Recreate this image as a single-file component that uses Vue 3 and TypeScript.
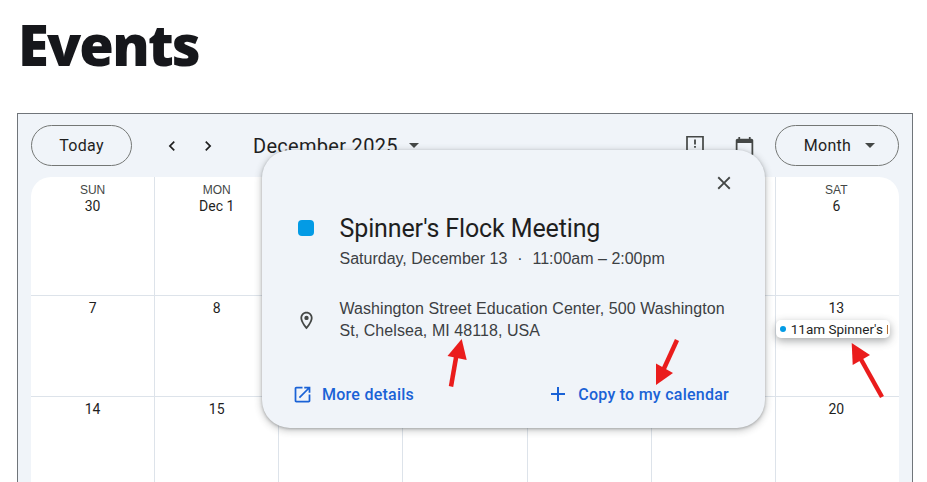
<template>
  <div class="page">
    <h1 class="page-title">Events</h1>

    <div class="calendar-frame">
      <div class="toolbar">
        <button class="pill today-button">Today</button>
        <div class="nav-arrows">
          <svg viewBox="0 0 24 24" class="chevron"><path d="M15.41 7.41 14 6l-6 6 6 6 1.41-1.41L10.83 12z" /></svg>
          <svg viewBox="0 0 24 24" class="chevron"><path d="M8.59 16.59 10 18l6-6-6-6-1.41 1.41L13.17 12z" /></svg>
        </div>
        <div class="month-title">December 2025</div>
        <span class="caret month-caret"></span>
        <div class="toolbar-spacer"></div>
        <svg viewBox="0 0 18 18" class="tool-icon feedback-icon">
          <path d="M1 1.75h16v15.5H1z" fill="none" stroke="#444746" stroke-width="1.7" />
          <path d="M8.1 4.5h1.8v5H8.1zM8.1 11h1.8v1.8H8.1z" fill="#444746" />
        </svg>
        <svg viewBox="0 0 24 24" class="tool-icon calendar-icon">
          <path d="M20 3h-1V1h-2v2H7V1H5v2H4c-1.1 0-2 .9-2 2v16c0 1.1.9 2 2 2h16c1.1 0 2-.9 2-2V5c0-1.1-.9-2-2-2zm0 18H4V8h16v13z" />
        </svg>
        <button class="pill month-button">
          <span>Month</span>
          <span class="caret"></span>
        </button>
      </div>

      <div class="month-grid">
        <div v-for="(cell, i) in cells" :key="i" class="day-cell" :class="{ 'first-row': i < 7 }">
          <div v-if="cell.weekday" class="weekday">{{ cell.weekday }}</div>
          <div class="day-number">{{ cell.label }}</div>
          <div v-if="cell.hasEvent" class="event-chip">
            <span class="event-dot"></span>
            <span class="event-text">11am Spinner's Flock Meeting</span>
          </div>
        </div>
      </div>
    </div>

    <div class="event-popup">
      <div class="popup-close">
        <svg viewBox="0 0 24 24"><path d="M19 6.41 17.59 5 12 10.59 6.41 5 5 6.41 10.59 12 5 17.59 6.41 19 12 13.41 17.59 19 19 17.59 13.41 12z" /></svg>
      </div>
      <div class="popup-row title-row">
        <div class="popup-gutter"><span class="color-square"></span></div>
        <div class="popup-title">Spinner's Flock Meeting</div>
      </div>
      <div class="popup-row">
        <div class="popup-gutter"></div>
        <div class="popup-when">Saturday, December 13 <span class="when-dot">·</span> 11:00am – 2:00pm</div>
      </div>
      <div class="popup-row location-row">
        <div class="popup-gutter">
          <svg viewBox="0 0 24 24" class="pin-icon">
            <path d="M12 2C8.13 2 5 5.13 5 9c0 5.25 7 13 7 13s7-7.75 7-13c0-3.87-3.13-7-7-7zM7 9c0-2.76 2.24-5 5-5s5 2.24 5 5c0 2.88-2.88 7.19-5 9.88C9.92 16.21 7 11.85 7 9z" />
            <circle cx="12" cy="9" r="2.5" />
          </svg>
        </div>
        <div class="popup-address">Washington Street Education Center, 500 Washington St, Chelsea, MI 48118, USA</div>
      </div>
      <div class="popup-actions">
        <a class="popup-link details-link">
          <svg viewBox="0 0 24 24"><path d="M19 19H5V5h7V3H5c-1.11 0-2 .9-2 2v14c0 1.1.89 2 2 2h14c1.1 0 2-.9 2-2v-7h-2v7zM14 3v2h3.59l-9.83 9.83 1.41 1.41L19 6.41V10h2V3h-7z" /></svg>
          More details
        </a>
        <a class="popup-link copy-link">
          <svg viewBox="0 0 24 24"><path d="M19 13h-6v6h-2v-6H5v-2h6V5h2v6h6v2z" /></svg>
          Copy to my calendar
        </a>
      </div>
    </div>

    <svg class="annotations" viewBox="0 0 927 482">
      <g v-for="arrow in arrows" :key="arrow.head">
        <path :d="arrow.shaft" class="arrow-shaft" />
        <polygon :points="arrow.head" class="arrow-head" />
      </g>
    </svg>
  </div>
</template>

<script setup lang="ts">
interface DayCell {
  label: string;
  weekday?: string;
  hasEvent?: boolean;
}

// the days behind the popup stay blank, only the visible ones get a label
const cells: DayCell[] = [
  { label: '30', weekday: 'SUN' },
  { label: 'Dec 1', weekday: 'MON' },
  { label: '' },
  { label: '' },
  { label: '' },
  { label: '' },
  { label: '6', weekday: 'SAT' },
  { label: '7' },
  { label: '8' },
  { label: '' },
  { label: '' },
  { label: '' },
  { label: '' },
  { label: '13', hasEvent: true },
  { label: '14' },
  { label: '15' },
  { label: '' },
  { label: '' },
  { label: '' },
  { label: '' },
  { label: '20' },
];

const arrows = [
  { shaft: 'M451 386.5L457 352', head: '461.7,339 447.5,356 466.7,360' },
  { shaft: 'M677 340L661 375', head: '656,385 656,363.5 673,373' },
  { shaft: 'M882 397L858 354', head: '851.7,343 852.7,365 870,355' },
];
</script>

<style>
html,
body {
  margin: 0;
  height: 482px;
  overflow: hidden;
  background: #fff;
}
</style>

<style scoped>
.page {
  position: relative;
  height: 482px;
  overflow: hidden;
  padding: 0 14px 0 17px;
  font-family: "Liberation Sans", Arial, sans-serif;
  color: #1f1f1f;
}

.page-title {
  margin: 0;
  height: 113px;
  padding-left: 1px;
  font-family: "Noto Sans", sans-serif;
  font-size: 56px;
  font-weight: 900;
  line-height: 88px;
  letter-spacing: -1.8px;
  color: #16171b;
}

.calendar-frame {
  box-sizing: border-box;
  height: 420px;
  border: 1px solid #70757a;
  background: #f0f4f9;
  padding: 11px 13px 0;
}

.toolbar {
  display: flex;
  align-items: center;
  height: 41px;
  margin-bottom: 11px;
  font-family: Roboto, sans-serif;
}

.pill {
  box-sizing: border-box;
  height: 41px;
  border: 1px solid #747775;
  border-radius: 21px;
  background: transparent;
  color: #1f1f1f;
  font-family: Roboto, sans-serif;
  font-size: 16px;
  letter-spacing: 0.3px;
  padding: 0;
}

.today-button {
  width: 101px;
}

.nav-arrows {
  display: flex;
  gap: 16px;
  margin-left: 30px;
}

.chevron {
  width: 20px;
  height: 20px;
  fill: #1f1f1f;
}

.month-title {
  margin-left: 35px;
  font-size: 20px;
  letter-spacing: 0.3px;
  color: #1f1f1f;
}

.caret {
  display: inline-block;
  width: 0;
  height: 0;
  border-left: 5px solid transparent;
  border-right: 5px solid transparent;
  border-top: 5px solid #444746;
}

.month-caret {
  margin-left: 11px;
}

.toolbar-spacer {
  flex: 1;
}

.tool-icon {
  flex: none;
  align-self: flex-start;
  margin-top: 10px;
}

.feedback-icon {
  width: 18px;
  height: 18px;
}

.calendar-icon {
  width: 21px;
  height: 23px;
  margin-left: 30px;
  margin-right: 20px;
  fill: #444746;
}

.month-button {
  width: 124px;
  display: flex;
  align-items: center;
  justify-content: center;
  gap: 14px;
  padding-left: 5px;
}

.month-grid {
  display: grid;
  grid-template-columns: repeat(6, 124.14px) 123.2px;
  grid-template-rows: 119px 101px 101px;
  width: 868px;
  background: #fff;
  border-radius: 20px 20px 0 0;
  overflow: hidden;
}

.day-cell {
  box-sizing: border-box;
  border-right: 1px solid #dde3ea;
  border-bottom: 1px solid #dde3ea;
  padding-top: 3px;
  text-align: center;
  font-size: 14px;
  line-height: 17px;
  color: #1f1f1f;
  min-width: 0;
}

.day-cell.first-row {
  padding-top: 6px;
}

.day-cell:nth-child(7n) {
  border-right: none;
  padding-right: 2px;
}

.weekday {
  font-size: 12px;
  line-height: 14px;
  color: #444746;
}

.day-number {
  line-height: 18px;
  font-family: Roboto, "Liberation Sans", sans-serif;
}

.event-chip {
  display: flex;
  align-items: center;
  box-sizing: border-box;
  width: 114px;
  height: 18px;
  margin: 3px 0 0 0;
  padding: 0 2px 0 4px;
  background: #fff;
  border-radius: 5px;
  box-shadow: 0 3px 8px rgba(60, 64, 67, 0.45);
  overflow: hidden;
  white-space: nowrap;
}

.event-dot {
  flex: none;
  width: 6px;
  height: 6px;
  margin-right: 5px;
  border-radius: 50%;
  background: #039be5;
}

.event-text {
  overflow: hidden;
  font-family: Roboto, sans-serif;
  font-size: 13.5px;
}

.event-popup {
  position: absolute;
  left: 262px;
  top: 150px;
  box-sizing: border-box;
  width: 503px;
  height: 278px;
  padding: 21px 36px 22px 0;
  background: #f0f4f9;
  border-radius: 28px;
  box-shadow: 0 2px 6px 2px rgba(60, 64, 67, 0.2), 0 1px 3px rgba(60, 64, 67, 0.35);
}

.popup-close {
  display: flex;
  justify-content: flex-end;
  align-items: center;
  height: 24px;
  margin-right: -6px;
}

.popup-close svg {
  width: 22px;
  height: 22px;
  fill: #444746;
}

.popup-row {
  display: flex;
}

.popup-gutter {
  flex: none;
  box-sizing: border-box;
  width: 77.5px;
  display: flex;
  align-items: center;
  justify-content: center;
  padding-left: 11px;
}

.title-row {
  margin-top: 18px;
  margin-bottom: 2px;
}

.color-square {
  width: 16px;
  height: 16px;
  border-radius: 4px;
  background: #039be5;
  margin-top: -2px;
}

.popup-title {
  font-family: Roboto, sans-serif;
  font-size: 25px;
  line-height: 32px;
  letter-spacing: -0.12px;
  color: #1f1f1f;
}

.popup-when {
  font-size: 16px;
  line-height: 24px;
  color: #3c4043;
}

.when-dot {
  margin: 0 5.5px;
}

.location-row {
  margin-top: 27px;
}

.pin-icon {
  width: 21px;
  height: 21px;
  fill: #444746;
}

.popup-address {
  font-size: 16px;
  line-height: 22px;
  letter-spacing: 0.06px;
  color: #3c4043;
}

.popup-actions {
  display: flex;
  justify-content: space-between;
  align-items: center;
  height: 24px;
  margin-top: 40px;
  padding-left: 30px;
}

.popup-link {
  display: flex;
  align-items: center;
  font-family: Roboto, sans-serif;
  font-size: 16px;
  font-weight: 500;
  letter-spacing: 0.25px;
  color: #1a62d6;
}

.details-link svg {
  width: 21px;
  height: 21px;
  margin-right: 9px;
  fill: #1a62d6;
}

.copy-link svg {
  width: 24px;
  height: 24px;
  margin-right: 8px;
  fill: #1a62d6;
}

.annotations {
  position: absolute;
  left: 0;
  top: 0;
  width: 927px;
  height: 482px;
  pointer-events: none;
}

.arrow-shaft {
  fill: none;
  stroke: #ea1c1c;
  stroke-width: 4.5;
}

.arrow-head {
  fill: #ea1c1c;
}
</style>
